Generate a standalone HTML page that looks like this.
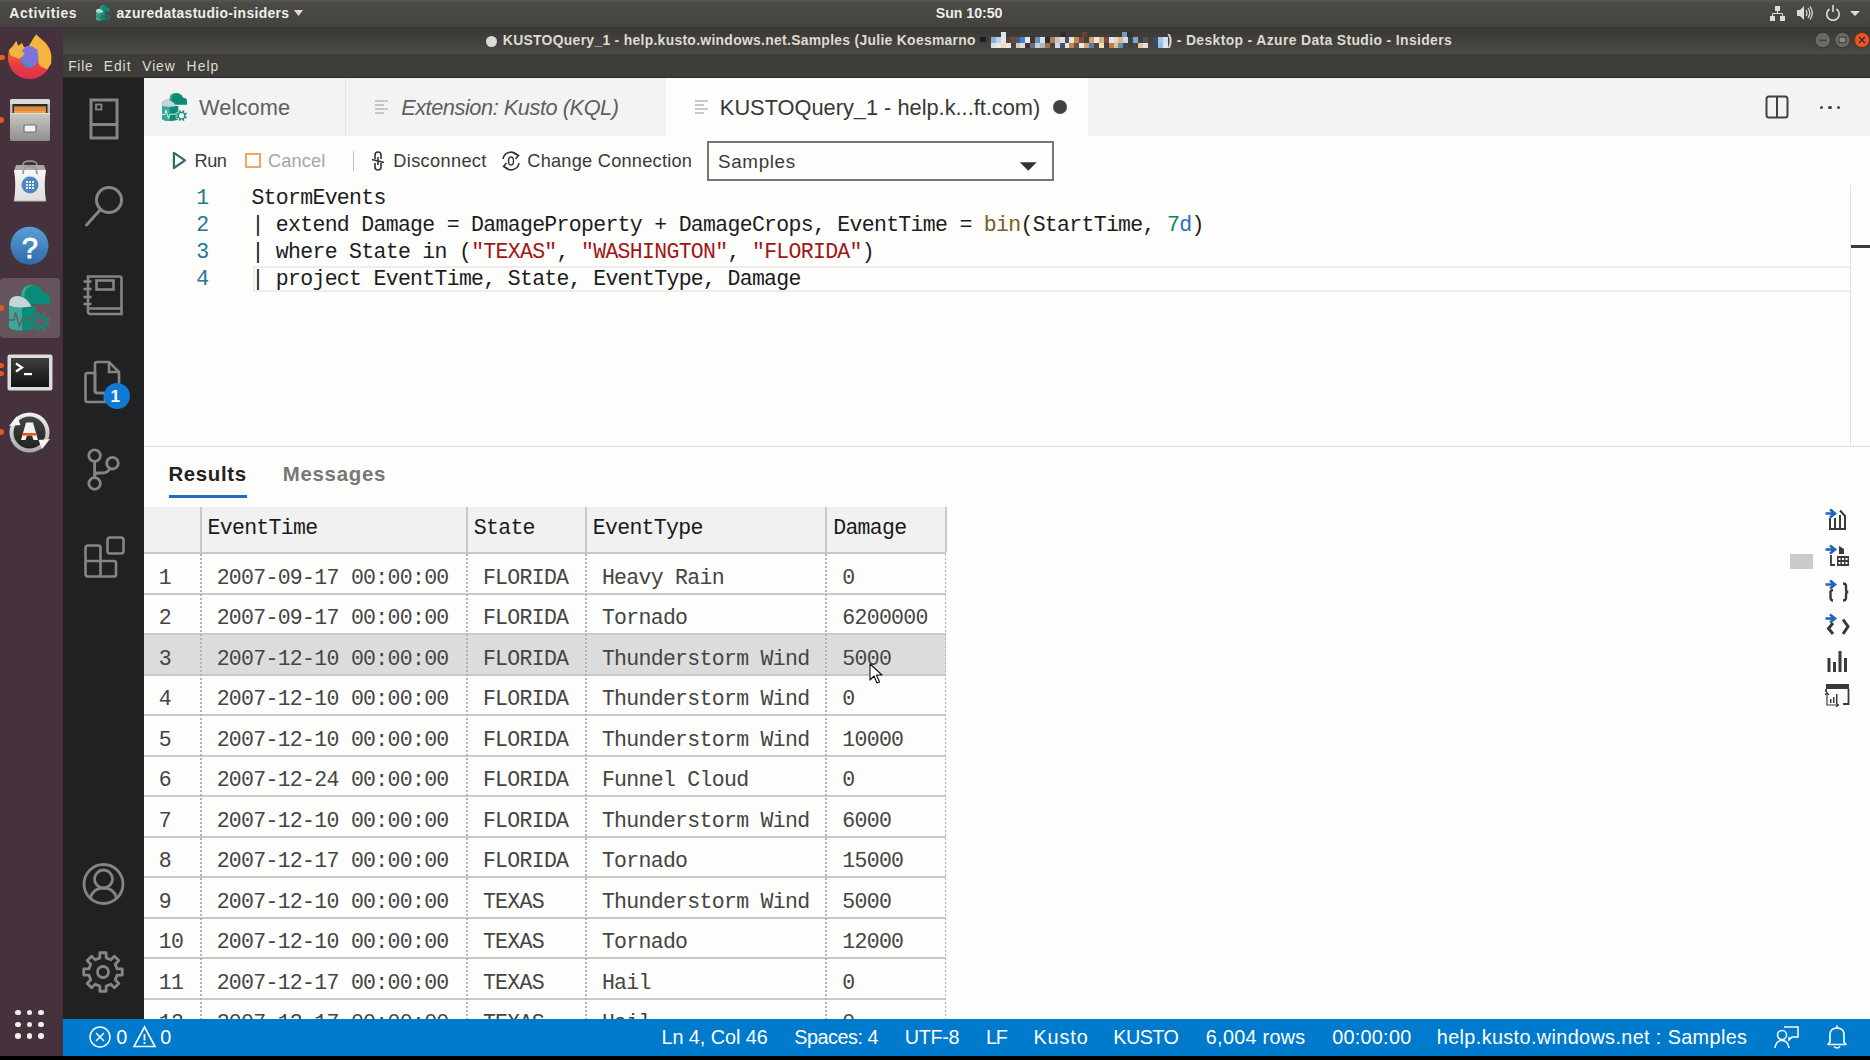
<!DOCTYPE html>
<html><head><meta charset="utf-8">
<style>
*{box-sizing:border-box;margin:0;padding:0}
html,body{width:1870px;height:1060px;overflow:hidden;background:#000;font-family:"Liberation Sans",sans-serif}
.t{position:absolute;white-space:pre;line-height:1}
.r{position:absolute;display:block}
.m{font-family:"Liberation Mono",monospace;letter-spacing:-0.695px}
</style></head><body>

<div class="r" style="left:0px;top:0px;width:1870px;height:27px;background:linear-gradient(#575651 0px,#4b4a45 3px,#44433f 26px);"></div>
<div class="t" style="left:9.32px;top:7.49px;font-size:13.9px;color:#eeeeec;letter-spacing:0.613px;font-weight:700;">Activities</div>
<svg class="r" style="left:96px;top:5px" width="14" height="15.5" viewBox="9 11 41 45.5"><path d="M21.5 30 V21 Q21.5 11 32 11 Q40 11 43.5 18.5 Q50 18.5 50 24.5 V30.2 Z" fill="#0c8b79"/>
<path d="M21.5 30 V21 Q21.5 11 32 11 Q33 11 34 11.3 Q24.5 13 24.5 21 V30 Z" fill="#3aa898"/>
<path d="M9 30 Q9 22 19 22 Q27 22 31 32 L35.6 32 V52 Q35.6 56.5 22 56.5 Q9 56.5 9 52z" fill="#0c8b79"/>
<path d="M9 30 Q9 22 19 22 Q22 22 22 30 V56.5 Q9 56.5 9 52z" fill="#3aa898"/>
<path d="M9 31 Q9 22 18 22 Q27 23 31.5 32.5 L22 33.5 Q12 33.5 9 31z" fill="#c6d6dc"/>
<path d="M8 46 H14 L15.5 38.5 L19.5 52 L22 45.5 H34" fill="none" stroke="#4a4945" stroke-width="1.4"/>
<polygon points="41.70,41.06 42.64,38.38 46.16,39.84 44.93,42.40 46.20,43.67 48.76,42.44 50.22,45.96 47.54,46.90 47.54,48.70 50.22,49.64 48.76,53.16 46.20,51.93 44.93,53.20 46.16,55.76 42.64,57.22 41.70,54.54 39.90,54.54 38.96,57.22 35.44,55.76 36.67,53.20 35.40,51.93 32.84,53.16 31.38,49.64 34.06,48.70 34.06,46.90 31.38,45.96 32.84,42.44 35.40,43.67 36.67,42.40 35.44,39.84 38.96,38.38 39.90,41.06" fill="#0c8b79" stroke="#4a4945" stroke-width="1"/>
<circle cx="40.8" cy="47.8" r="4.3" fill="#4a4945"/></svg>
<div class="t" style="left:116.52px;top:7.49px;font-size:13.9px;color:#eeeeec;letter-spacing:0.355px;font-weight:700;">azuredatastudio-insiders</div>
<svg class="r" style="left:294px;top:10px;" width="10" height="7" viewBox="0 0 10 7"><path d="M0 0 L9 0 L4.5 6z" fill="#dcdcd8"/></svg>
<div class="t" style="left:935.83px;top:6.38px;font-size:14.2px;color:#eeeeec;letter-spacing:-0.048px;font-weight:700;">Sun 10:50</div>
<svg class="r" style="left:1769px;top:5px;" width="17" height="17" viewBox="0 0 17 17"><rect x="6" y="1" width="5" height="5" fill="#dcdcdc"/><rect x="1" y="11" width="5" height="5" fill="#dcdcdc"/><rect x="11" y="11" width="5" height="5" fill="#dcdcdc"/><path d="M8.5 6 V8.5 M3.5 11 V8.5 H13.5 V11" stroke="#dcdcdc" stroke-width="1" fill="none"/></svg>
<svg class="r" style="left:1796px;top:5px;" width="17" height="16" viewBox="0 0 17 16"><path d="M1 5 H4 L8 1 V15 L4 11 H1z" fill="#dcdcdc"/><path d="M10 5 Q12 8 10 11 M12 3 Q15.5 8 12 13 M14 1.5 Q18.5 8 14 14.5" stroke="#dcdcdc" stroke-width="1.3" fill="none"/></svg>
<svg class="r" style="left:1825px;top:4px;" width="16" height="17" viewBox="0 0 16 17"><path d="M4.5 5 A6.2 6.2 0 1 0 11.5 5" stroke="#dcdcdc" stroke-width="1.6" fill="none"/><path d="M8 1 V8" stroke="#dcdcdc" stroke-width="1.6"/></svg>
<svg class="r" style="left:1850px;top:11px;" width="11" height="6" viewBox="0 0 11 6"><path d="M0 0 H10 L5 5z" fill="#dcdcdc"/></svg>
<div class="r" style="left:0px;top:27px;width:63px;height:1029px;background:#46323c;"></div>
<svg class="r" style="left:0px;top:26px;" width="62" height="64" viewBox="0 0 62 64"><defs><linearGradient id="ffg" x1="0" y1="0" x2="0" y2="1"><stop offset="0" stop-color="#f39a30"/><stop offset="0.45" stop-color="#ee5a2c"/><stop offset="0.7" stop-color="#e73a46"/><stop offset="1" stop-color="#e22f4b"/></linearGradient></defs>
<circle cx="29.6" cy="31.4" r="21.7" fill="url(#ffg)"/>
<path d="M0 1.2 L36.2 1.2 L36.2 8.2 L29 20 L24 21.5 L22 16.9 L18.1 19.9 L16.3 15 L13 20 L9 24 L0 26z" fill="#46323c"/>
<path d="M9 24 L13 20 L16.3 15 L18.1 19.9 L22 16.9 L24 21.5 L29 20 L33 13 L36.2 8.2 L41 13 L45.9 18.1 L49.5 23 L51.3 29 L51.2 37.4 L47 43.5 L40 40 L38.6 37.4 L38 28 L33 22 L25 24 L20 33 L14 31 L10 29z" fill="#f3b53e"/>
<ellipse cx="29.5" cy="30.9" rx="9" ry="10.9" fill="#7b74da"/>
<path d="M20.6 33 Q22 40 29 41.8 Q33 41.8 35 40 Q27 40 24 35z" fill="#3a8fd0"/>
<path d="M34 22 Q37 23 38.5 25 Q36 25.5 34.5 24.5z" fill="#7b74da"/>
<path d="M13.5 27 L21 25 L25 27 L22 31 L16 31z" fill="#f3b53e"/></svg>
<div class="r" style="left:0px;top:55px;width:4.5px;height:5px;background:#ee5a24;border-radius:0 3px 3px 0"></div>
<svg class="r" style="left:9px;top:98px;" width="42" height="44" viewBox="0 0 42 44"><defs><linearGradient id="fg1" x1="0" y1="0" x2="0" y2="1"><stop offset="0" stop-color="#c9c9c7"/><stop offset="1" stop-color="#8e8e8c"/></linearGradient></defs>
<rect x="1" y="1" width="40" height="42" rx="2.5" fill="url(#fg1)"/>
<rect x="1" y="1" width="40" height="5" rx="2" fill="#dadad8"/>
<rect x="3.5" y="6" width="35" height="9" fill="#2b2b29"/>
<rect x="5" y="8.5" width="32" height="6.5" fill="#f0a048"/>
<path d="M5 10 H37 M5 12 H37" stroke="#d8602a" stroke-width="0.8"/>
<rect x="1" y="15" width="40" height="28" rx="2" fill="url(#fg1)"/>
<path d="M1 15.5 H41" stroke="#e2e2e0" stroke-width="1"/>
<rect x="15" y="27" width="12" height="7" rx="1" fill="#f2f2f0" stroke="#6e6e6c" stroke-width="1.2"/></svg>
<div class="r" style="left:0px;top:117px;width:4px;height:6px;background:#e95420;border-radius:0 3px 3px 0"></div>
<svg class="r" style="left:11px;top:160px;" width="38" height="43" viewBox="0 0 38 43"><defs><linearGradient id="bg1" x1="0" y1="0" x2="0" y2="1"><stop offset="0" stop-color="#f6f6f4"/><stop offset="1" stop-color="#dededc"/></linearGradient></defs>
<path d="M5 5 H33 L35 11 H3z" fill="#a8a8a6"/>
<path d="M3 10 H35 Q32.5 25 35 41 H3 Q5.5 25 3 10z" fill="url(#bg1)"/>
<path d="M3 41 H35" stroke="#b8b8b6" stroke-width="1"/>
<path d="M12 14 Q12 6 19 6 Q26 6 26 14" stroke="#9a9a98" stroke-width="1.8" fill="none"/>
<path d="M12 5 Q12 1 19 1 Q26 1 26 5" stroke="#9a9a98" stroke-width="1.6" fill="none"/>
<circle cx="19" cy="25" r="8.5" fill="#4f86c6"/>
<g fill="#e8eef8"><rect x="15" y="21" width="2" height="2"/><rect x="18" y="21" width="2" height="2"/><rect x="21" y="21" width="2" height="2"/><rect x="15" y="24" width="2" height="2"/><rect x="18" y="24" width="2" height="2"/><rect x="21" y="24" width="2" height="2"/><rect x="15" y="27" width="2" height="2"/><rect x="18" y="27" width="2" height="2"/><rect x="21" y="27" width="2" height="2"/></g></svg>
<svg class="r" style="left:10px;top:226px;" width="40" height="40" viewBox="0 0 40 40"><defs><linearGradient id="hg" x1="0" y1="0" x2="0" y2="1"><stop offset="0" stop-color="#5b9fd8"/><stop offset="1" stop-color="#2f6aa8"/></linearGradient></defs>
<circle cx="19.5" cy="19.7" r="19" fill="url(#hg)"/>
<text x="19.8" y="31.5" text-anchor="middle" font-family="Liberation Sans" font-weight="400" font-size="29" fill="#fff" stroke="#fff" stroke-width="0.9">?</text></svg>
<div class="r" style="left:0px;top:278px;width:60px;height:60px;background:rgba(255,255,255,0.17);border-radius:4px"></div>
<svg class="r" style="left:0px;top:274px;" width="62" height="68" viewBox="0 0 62 68"><path d="M21.5 30 V21 Q21.5 11 32 11 Q40 11 43.5 18.5 Q50 18.5 50 24.5 V30.2 Z" fill="#0c8b79"/>
<path d="M21.5 30 V21 Q21.5 11 32 11 Q33 11 34 11.3 Q24.5 13 24.5 21 V30 Z" fill="#3aa898"/>
<path d="M9 30 Q9 22 19 22 Q27 22 31 32 L35.6 32 V52 Q35.6 56.5 22 56.5 Q9 56.5 9 52z" fill="#0c8b79"/>
<path d="M9 30 Q9 22 19 22 Q22 22 22 30 V56.5 Q9 56.5 9 52z" fill="#3aa898"/>
<path d="M9 31 Q9 22 18 22 Q27 23 31.5 32.5 L22 33.5 Q12 33.5 9 31z" fill="#c6d6dc"/>
<path d="M8 46 H14 L15.5 38.5 L19.5 52 L22 45.5 H34" fill="none" stroke="#6a5a5f" stroke-width="1.4"/>
<polygon points="41.70,41.06 42.64,38.38 46.16,39.84 44.93,42.40 46.20,43.67 48.76,42.44 50.22,45.96 47.54,46.90 47.54,48.70 50.22,49.64 48.76,53.16 46.20,51.93 44.93,53.20 46.16,55.76 42.64,57.22 41.70,54.54 39.90,54.54 38.96,57.22 35.44,55.76 36.67,53.20 35.40,51.93 32.84,53.16 31.38,49.64 34.06,48.70 34.06,46.90 31.38,45.96 32.84,42.44 35.40,43.67 36.67,42.40 35.44,39.84 38.96,38.38 39.90,41.06" fill="#0c8b79" stroke="#6a5a5f" stroke-width="1"/>
<circle cx="40.8" cy="47.8" r="4.3" fill="#6a5a5f"/></svg>
<div class="r" style="left:0px;top:305px;width:4px;height:6px;background:#e95420;border-radius:0 3px 3px 0"></div>
<svg class="r" style="left:7px;top:354px;" width="46" height="37" viewBox="0 0 46 37"><defs><linearGradient id="tmg" x1="0" y1="0" x2="0" y2="1"><stop offset="0" stop-color="#3e3e3c"/><stop offset="1" stop-color="#121212"/></linearGradient></defs>
<rect x="0.5" y="0.5" width="45" height="36" rx="2" fill="#dcdcda"/>
<rect x="4" y="4" width="38" height="29" fill="url(#tmg)"/>
<path d="M9 9.5 L15 13.5 L9 17.5" stroke="#fff" stroke-width="2.2" fill="none"/>
<rect x="17" y="19" width="8" height="2.2" fill="#fff"/></svg>
<div class="r" style="left:0px;top:363px;width:4px;height:5px;background:#e95420;border-radius:0 3px 3px 0"></div>
<div class="r" style="left:0px;top:371px;width:4px;height:5px;background:#e95420;border-radius:0 3px 3px 0"></div>
<svg class="r" style="left:8px;top:411px;" width="43" height="43" viewBox="0 0 43 43"><defs><linearGradient id="ug" x1="0" y1="0" x2="0" y2="1"><stop offset="0" stop-color="#f4f4f2"/><stop offset="1" stop-color="#a8a8a6"/></linearGradient><linearGradient id="tg" x1="0" y1="0" x2="0" y2="1"><stop offset="0" stop-color="#444442"/><stop offset="1" stop-color="#222220"/></linearGradient></defs>
<circle cx="21.5" cy="21.5" r="20" fill="url(#ug)"/>
<circle cx="21.5" cy="21.5" r="16" fill="url(#tg)"/>
<path d="M13 29 L18 11.5 H25 L30 29 H25.5 L24 24.5 H19 L17.5 29z" fill="#f2f2f0"/>
<rect x="14" y="22" width="14" height="2.6" fill="#e95420"/>
<path d="M1 15 L9 5 L12.5 14z" fill="#f4f4f2"/><path d="M42 28 L34 38 L30.5 29z" fill="#f4f4f2"/></svg>
<div class="r" style="left:0px;top:429px;width:4px;height:6px;background:#e95420;border-radius:0 3px 3px 0"></div>
<div class="r" style="left:15.0px;top:1009.9px;width:5.6px;height:5.6px;border-radius:50%;background:#eeeeec"></div>
<div class="r" style="left:15.0px;top:1021.5px;width:5.6px;height:5.6px;border-radius:50%;background:#eeeeec"></div>
<div class="r" style="left:15.0px;top:1033.1px;width:5.6px;height:5.6px;border-radius:50%;background:#eeeeec"></div>
<div class="r" style="left:26.7px;top:1009.9px;width:5.6px;height:5.6px;border-radius:50%;background:#eeeeec"></div>
<div class="r" style="left:26.7px;top:1021.5px;width:5.6px;height:5.6px;border-radius:50%;background:#eeeeec"></div>
<div class="r" style="left:26.7px;top:1033.1px;width:5.6px;height:5.6px;border-radius:50%;background:#eeeeec"></div>
<div class="r" style="left:38.4px;top:1009.9px;width:5.6px;height:5.6px;border-radius:50%;background:#eeeeec"></div>
<div class="r" style="left:38.4px;top:1021.5px;width:5.6px;height:5.6px;border-radius:50%;background:#eeeeec"></div>
<div class="r" style="left:38.4px;top:1033.1px;width:5.6px;height:5.6px;border-radius:50%;background:#eeeeec"></div>
<div class="r" style="left:63px;top:27px;width:1807px;height:27px;background:linear-gradient(#393834 0px,#3c3b37 6px,#4b4a45 27px);"></div>
<div class="r" style="left:486px;top:35.6px;width:11.4px;height:11.4px;border-radius:50%;background:#dcdad5"></div>
<div class="t" style="left:502.87px;top:33.59px;font-size:13.9px;color:#dfdbd2;letter-spacing:0.301px;font-weight:700;">KUSTOQuery_1 - help.kusto.windows.net.Samples (Julie Koesmarno</div>
<div class="r" style="left:991.0px;top:37px;width:5px;height:5.5px;background:#8ab0d0;"></div>
<div class="r" style="left:995.9px;top:37px;width:5px;height:5.5px;background:#b8d4e8;"></div>
<div class="r" style="left:1000.8px;top:37px;width:5px;height:5.5px;background:#e0e8ee;"></div>
<div class="r" style="left:1005.7px;top:37px;width:5px;height:5.5px;background:#5a4035;"></div>
<div class="r" style="left:1010.6px;top:37px;width:5px;height:5.5px;background:#6a4a40;"></div>
<div class="r" style="left:1015.5px;top:37px;width:5px;height:5.5px;background:#3a5a90;"></div>
<div class="r" style="left:1020.4px;top:37px;width:5px;height:5.5px;background:#4a80c0;"></div>
<div class="r" style="left:1025.3px;top:37px;width:5px;height:5.5px;background:#e0e8f0;"></div>
<div class="r" style="left:1030.2px;top:37px;width:5px;height:5.5px;background:#4a3030;"></div>
<div class="r" style="left:1035.1px;top:37px;width:5px;height:5.5px;background:#6a90b8;"></div>
<div class="r" style="left:1040.0px;top:37px;width:5px;height:5.5px;background:#d0e0f0;"></div>
<div class="r" style="left:1044.9px;top:37px;width:5px;height:5.5px;background:#302838;"></div>
<div class="r" style="left:1049.8px;top:37px;width:5px;height:5.5px;background:#b08050;"></div>
<div class="r" style="left:1054.7px;top:37px;width:5px;height:5.5px;background:#c0c8d0;"></div>
<div class="r" style="left:1059.6px;top:37px;width:5px;height:5.5px;background:#f0e0c0;"></div>
<div class="r" style="left:1064.5px;top:37px;width:5px;height:5.5px;background:#3a5080;"></div>
<div class="r" style="left:1069.4px;top:37px;width:5px;height:5.5px;background:#f0e0d0;"></div>
<div class="r" style="left:1074.3px;top:37px;width:5px;height:5.5px;background:#c08850;"></div>
<div class="r" style="left:1079.2px;top:37px;width:5px;height:5.5px;background:#705040;"></div>
<div class="r" style="left:1089.0px;top:37px;width:5px;height:5.5px;background:#d0a070;"></div>
<div class="r" style="left:1093.9px;top:37px;width:5px;height:5.5px;background:#e8e8e8;"></div>
<div class="r" style="left:1098.8px;top:37px;width:5px;height:5.5px;background:#d8b080;"></div>
<div class="r" style="left:1103.7px;top:37px;width:5px;height:5.5px;background:#804830;"></div>
<div class="r" style="left:1108.6px;top:37px;width:5px;height:5.5px;background:#d8e8f8;"></div>
<div class="r" style="left:1113.5px;top:37px;width:5px;height:5.5px;background:#e8d8b0;"></div>
<div class="r" style="left:1118.4px;top:37px;width:5px;height:5.5px;background:#d8b888;"></div>
<div class="r" style="left:1123.3px;top:37px;width:5px;height:5.5px;background:#c8e0f0;"></div>
<div class="r" style="left:1133.1px;top:37px;width:5px;height:5.5px;background:#80a8c8;"></div>
<div class="r" style="left:1142.9px;top:37px;width:5px;height:5.5px;background:#505050;"></div>
<div class="r" style="left:1152.7px;top:37px;width:5px;height:5.5px;background:#404860;"></div>
<div class="r" style="left:1157.6px;top:37px;width:5px;height:5.5px;background:#a0c8e8;"></div>
<div class="r" style="left:1162.5px;top:37px;width:5px;height:5.5px;background:#d8e0e8;"></div>
<div class="r" style="left:991.0px;top:42.5px;width:5px;height:5px;background:#e0e0e0;"></div>
<div class="r" style="left:995.9px;top:42.5px;width:5px;height:5px;background:#e8e8e8;"></div>
<div class="r" style="left:1000.8px;top:42.5px;width:5px;height:5px;background:#f0d8b8;"></div>
<div class="r" style="left:1005.7px;top:42.5px;width:5px;height:5px;background:#e8e8e8;"></div>
<div class="r" style="left:1015.5px;top:42.5px;width:5px;height:5px;background:#e0c8a8;"></div>
<div class="r" style="left:1020.4px;top:42.5px;width:5px;height:5px;background:#d8dde0;"></div>
<div class="r" style="left:1025.3px;top:42.5px;width:5px;height:5px;background:#4a3030;"></div>
<div class="r" style="left:1030.2px;top:42.5px;width:5px;height:5px;background:#607080;"></div>
<div class="r" style="left:1035.1px;top:42.5px;width:5px;height:5px;background:#c8d0d0;"></div>
<div class="r" style="left:1040.0px;top:42.5px;width:5px;height:5px;background:#a8b8c8;"></div>
<div class="r" style="left:1044.9px;top:42.5px;width:5px;height:5px;background:#a07040;"></div>
<div class="r" style="left:1054.7px;top:42.5px;width:5px;height:5px;background:#d8d8d8;"></div>
<div class="r" style="left:1059.6px;top:42.5px;width:5px;height:5px;background:#3a5080;"></div>
<div class="r" style="left:1064.5px;top:42.5px;width:5px;height:5px;background:#f0e0d0;"></div>
<div class="r" style="left:1069.4px;top:42.5px;width:5px;height:5px;background:#c08850;"></div>
<div class="r" style="left:1074.3px;top:42.5px;width:5px;height:5px;background:#705040;"></div>
<div class="r" style="left:1079.2px;top:42.5px;width:5px;height:5px;background:#e8e8e8;"></div>
<div class="r" style="left:1084.1px;top:42.5px;width:5px;height:5px;background:#d8a070;"></div>
<div class="r" style="left:1089.0px;top:42.5px;width:5px;height:5px;background:#5080b0;"></div>
<div class="r" style="left:1093.9px;top:42.5px;width:5px;height:5px;background:#604030;"></div>
<div class="r" style="left:1098.8px;top:42.5px;width:5px;height:5px;background:#f0e0c0;"></div>
<div class="r" style="left:1103.7px;top:42.5px;width:5px;height:5px;background:#404050;"></div>
<div class="r" style="left:1108.6px;top:42.5px;width:5px;height:5px;background:#c08040;"></div>
<div class="r" style="left:1113.5px;top:42.5px;width:5px;height:5px;background:#e0c090;"></div>
<div class="r" style="left:1118.4px;top:42.5px;width:5px;height:5px;background:#6090b0;"></div>
<div class="r" style="left:1128.2px;top:42.5px;width:5px;height:5px;background:#404040;"></div>
<div class="r" style="left:1138.0px;top:42.5px;width:5px;height:5px;background:#e0c8a0;"></div>
<div class="r" style="left:1142.9px;top:42.5px;width:5px;height:5px;background:#e0e0e0;"></div>
<div class="r" style="left:1152.7px;top:42.5px;width:5px;height:5px;background:#404860;"></div>
<div class="r" style="left:1157.6px;top:42.5px;width:5px;height:5px;background:#90c0e8;"></div>
<div class="r" style="left:1162.5px;top:42.5px;width:5px;height:5px;background:#e0e8f0;"></div>
<div class="r" style="left:980px;top:37px;width:6px;height:5px;background:#1e1e22;"></div>
<div class="r" style="left:1001px;top:32px;width:5px;height:5px;background:#dde4ea;"></div>
<div class="r" style="left:1061px;top:32px;width:5px;height:5px;background:#2b2b30;"></div>
<div class="r" style="left:1082px;top:32px;width:5px;height:5px;background:#6a4030;"></div>
<div class="r" style="left:1122px;top:32px;width:5px;height:5px;background:#7a9ab8;"></div>
<div class="r" style="left:1127px;top:32px;width:5px;height:5px;background:#303035;"></div>
<div class="t" style="left:1167.50px;top:33.59px;font-size:13.9px;color:#dfdbd2;letter-spacing:0.374px;font-weight:700;">) - Desktop - Azure Data Studio - Insiders</div>
<svg class="r" style="left:1814px;top:32px;" width="56" height="17" viewBox="0 0 56 17"><circle cx="8.8" cy="8.1" r="7.7" fill="#6a6964" stroke="#2f2e2b" stroke-width="0.8"/>
<rect x="5.5" y="7.6" width="6.6" height="1.2" fill="#3a3936"/>
<circle cx="28.4" cy="8.1" r="7.7" fill="#6a6964" stroke="#2f2e2b" stroke-width="0.8"/>
<rect x="25" y="5.2" width="6.8" height="5.4" fill="#8a8984" stroke="#3a3936" stroke-width="1"/>
<circle cx="48" cy="8.1" r="7.7" fill="#e95420" stroke="#2f2e2b" stroke-width="0.8"/>
<path d="M45 5 L51 11 M51 5 L45 11" stroke="#2a2a2a" stroke-width="1.2"/></svg>
<div class="r" style="left:63px;top:54px;width:1807px;height:24px;background:#3e3d39;"></div>
<div class="r" style="left:63px;top:77px;width:1807px;height:1px;background:#2a2a28;"></div>
<div class="t" style="left:68.20px;top:59.87px;font-size:13.8px;color:#dfdbd2;letter-spacing:0.759px;">File</div>
<div class="t" style="left:103.70px;top:59.87px;font-size:13.8px;color:#dfdbd2;letter-spacing:1.023px;">Edit</div>
<div class="t" style="left:142.30px;top:59.87px;font-size:13.8px;color:#dfdbd2;letter-spacing:0.889px;">View</div>
<div class="t" style="left:186.60px;top:59.87px;font-size:13.8px;color:#dfdbd2;letter-spacing:1.076px;">Help</div>
<div class="r" style="left:63px;top:78px;width:81px;height:941px;background:#212124;"></div>
<svg class="r" style="left:88px;top:97px;" width="32" height="44" viewBox="0 0 32 44"><rect x="3" y="3" width="26" height="38" fill="none" stroke="#858585" stroke-width="3"/>
<path d="M3 27.5 H29" stroke="#858585" stroke-width="3"/>
<rect x="8" y="7.5" width="5.5" height="5" fill="none" stroke="#858585" stroke-width="1.8"/></svg>
<svg class="r" style="left:82px;top:182px;" width="44" height="48" viewBox="0 0 44 48"><circle cx="27" cy="18" r="12.5" fill="none" stroke="#858585" stroke-width="3"/>
<path d="M18.5 27.5 L4.5 43" stroke="#858585" stroke-width="3" stroke-linecap="round"/></svg>
<svg class="r" style="left:82px;top:273px;" width="42" height="44" viewBox="0 0 42 44"><path d="M6 3.5 H37.5 Q39.5 3.5 39.5 5.5 V41 H8.5 Q6 41 6 38.5z" fill="none" stroke="#858585" stroke-width="2.6"/>
<path d="M6 35.5 H39.5" stroke="#858585" stroke-width="2.6"/>
<rect x="14.5" y="7.5" width="17" height="9" fill="none" stroke="#858585" stroke-width="2.6"/>
<path d="M1.5 8.5 H9.5 M1.5 16 H9.5 M1.5 24 H9.5 M1.5 31 H9.5" stroke="#858585" stroke-width="2.6"/></svg>
<svg class="r" style="left:82px;top:360px;" width="42" height="46" viewBox="0 0 42 46"><path d="M3.5 15 Q3.5 13 5.5 13 H13 V31 Q13 33 15 33 H23 V42 H5.5 Q3.5 42 3.5 40z" fill="none" stroke="#858585" stroke-width="2.6"/>
<path d="M13 4 Q13 2 15 2 H27 L37 12 V31 Q37 33 35 33 H15 Q13 33 13 31z" fill="none" stroke="#858585" stroke-width="2.6"/>
<path d="M27 2 V12 H37" fill="none" stroke="#858585" stroke-width="2.6"/></svg>
<div class="r" style="left:104px;top:382.7px;width:26px;height:26px;border-radius:50%;background:#0e7ad4"></div>
<div class="t" style="left:110.50px;top:387.75px;font-size:17px;color:#ffffff;font-weight:700;">1</div>
<svg class="r" style="left:84px;top:444px;" width="42" height="48" viewBox="0 0 42 48"><circle cx="10.6" cy="11.6" r="5.8" fill="none" stroke="#858585" stroke-width="2.8"/>
<circle cx="28.5" cy="19.2" r="5.8" fill="none" stroke="#858585" stroke-width="2.8"/>
<circle cx="10.6" cy="39.5" r="5.8" fill="none" stroke="#858585" stroke-width="2.8"/>
<path d="M10.6 17.4 V33.7" stroke="#858585" stroke-width="2.8"/>
<path d="M26 24.5 Q24 29 18 29 H14 Q11 29 10.6 32" fill="none" stroke="#858585" stroke-width="2.8"/></svg>
<svg class="r" style="left:82px;top:536px;" width="44" height="44" viewBox="0 0 44 44"><path d="M3.5 35 V33 M3.5 38 Q3.5 40.5 6 40.5 H32 Q34 40.5 34 38.5 V27 Q34 25 32 25 H18.5 V11.5 Q18.5 9.5 16.5 9.5 H6 Q3.5 9.5 3.5 12z" fill="none" stroke="#858585" stroke-width="2.6"/>
<path d="M3.5 25 H18.5 V40.5" fill="none" stroke="#858585" stroke-width="2.6"/>
<rect x="25.5" y="1.5" width="16" height="16" rx="2.5" fill="none" stroke="#858585" stroke-width="2.6"/></svg>
<svg class="r" style="left:81px;top:861px;" width="46" height="46" viewBox="0 0 46 46"><circle cx="22.5" cy="23" r="19.5" fill="none" stroke="#858585" stroke-width="2.8"/>
<circle cx="22.5" cy="18" r="9" fill="none" stroke="#858585" stroke-width="2.8"/>
<path d="M9.5 37 Q12 27 22.5 27 Q33 27 35.5 37" fill="none" stroke="#858585" stroke-width="2.8"/></svg>
<svg class="r" style="left:80px;top:949px;" width="46" height="46" viewBox="0 0 46 46"><polygon points="19.84,8.85 19.89,3.75 26.11,3.75 26.16,8.85 30.77,10.76 34.42,7.19 38.81,11.58 35.24,15.23 37.15,19.84 42.25,19.89 42.25,26.11 37.15,26.16 35.24,30.77 38.81,34.42 34.42,38.81 30.77,35.24 26.16,37.15 26.11,42.25 19.89,42.25 19.84,37.15 15.23,35.24 11.58,38.81 7.19,34.42 10.76,30.77 8.85,26.16 3.75,26.11 3.75,19.89 8.85,19.84 10.76,15.23 7.19,11.58 11.58,7.19 15.23,10.76" fill="none" stroke="#858585" stroke-width="2.8" stroke-linejoin="round"/>
<circle cx="23" cy="23" r="5.5" fill="none" stroke="#858585" stroke-width="2.8"/></svg>
<div class="r" style="left:144px;top:78px;width:1726px;height:58px;background:#f3f3f3;"></div>
<div class="r" style="left:345px;top:78px;width:1px;height:58px;background:#e4e4e4;"></div>
<div class="r" style="left:666px;top:78px;width:422px;height:58px;background:#fdfdfc;"></div>
<svg class="r" style="left:161.5px;top:92.5px" width="25.2" height="28" viewBox="9 11 41 45.5"><path d="M21.5 30 V21 Q21.5 11 32 11 Q40 11 43.5 18.5 Q50 18.5 50 24.5 V30.2 Z" fill="#0c8b79"/>
<path d="M21.5 30 V21 Q21.5 11 32 11 Q33 11 34 11.3 Q24.5 13 24.5 21 V30 Z" fill="#3aa898"/>
<path d="M9 30 Q9 22 19 22 Q27 22 31 32 L35.6 32 V52 Q35.6 56.5 22 56.5 Q9 56.5 9 52z" fill="#0c8b79"/>
<path d="M9 30 Q9 22 19 22 Q22 22 22 30 V56.5 Q9 56.5 9 52z" fill="#3aa898"/>
<path d="M9 31 Q9 22 18 22 Q27 23 31.5 32.5 L22 33.5 Q12 33.5 9 31z" fill="#c6d6dc"/>
<path d="M8 46 H14 L15.5 38.5 L19.5 52 L22 45.5 H34" fill="none" stroke="#f3f3f3" stroke-width="1.4"/>
<polygon points="41.70,41.06 42.64,38.38 46.16,39.84 44.93,42.40 46.20,43.67 48.76,42.44 50.22,45.96 47.54,46.90 47.54,48.70 50.22,49.64 48.76,53.16 46.20,51.93 44.93,53.20 46.16,55.76 42.64,57.22 41.70,54.54 39.90,54.54 38.96,57.22 35.44,55.76 36.67,53.20 35.40,51.93 32.84,53.16 31.38,49.64 34.06,48.70 34.06,46.90 31.38,45.96 32.84,42.44 35.40,43.67 36.67,42.40 35.44,39.84 38.96,38.38 39.90,41.06" fill="#0c8b79" stroke="#f3f3f3" stroke-width="1"/>
<circle cx="40.8" cy="47.8" r="4.3" fill="#f3f3f3"/></svg>
<div class="t" style="left:199.00px;top:97.07px;font-size:21.8px;color:#5f5f5f;letter-spacing:0.103px;">Welcome</div>
<svg class="r" style="left:375px;top:100px;" width="14" height="15" viewBox="0 0 14 15"><path d="M0 1 H13 M0 5 H9 M0 9 H13 M0 13 H9" stroke="#b8b8b8" stroke-width="1.6"/></svg>
<div class="t" style="left:401.13px;top:97.07px;font-size:21.8px;color:#5f5f5f;letter-spacing:-0.469px;font-style:italic;">Extension: Kusto (KQL)</div>
<svg class="r" style="left:695px;top:99.5px;" width="14" height="15" viewBox="0 0 14 15"><path d="M0 1 H13 M0 5 H9 M0 9 H13 M0 13 H9" stroke="#b8b8b8" stroke-width="1.6"/></svg>
<div class="t" style="left:719.86px;top:97.07px;font-size:21.8px;color:#383838;letter-spacing:-0.007px;">KUSTOQuery_1 - help.k...ft.com)</div>
<div class="r" style="left:1053px;top:99.6px;width:14px;height:14px;border-radius:50%;background:#424242"></div>
<svg class="r" style="left:1765px;top:95px;" width="24" height="24" viewBox="0 0 24 24"><rect x="1.5" y="1.5" width="21" height="21" rx="2.5" fill="none" stroke="#424242" stroke-width="2"/><path d="M12 1.5 V22.5" stroke="#424242" stroke-width="2"/></svg>
<div class="r" style="left:1819.8px;top:105.8px;width:3.6px;height:3.6px;border-radius:50%;background:#424242"></div>
<div class="r" style="left:1828.2px;top:105.8px;width:3.6px;height:3.6px;border-radius:50%;background:#424242"></div>
<div class="r" style="left:1836.8px;top:105.8px;width:3.6px;height:3.6px;border-radius:50%;background:#424242"></div>
<div class="r" style="left:144px;top:136px;width:1726px;height:310px;background:#fdfdfc;"></div>
<svg class="r" style="left:171px;top:150px;" width="18" height="21" viewBox="0 0 18 21"><path d="M2.9 2.8 L14 10.4 L2.9 18z" fill="none" stroke="#2b6f6c" stroke-width="2.2" stroke-linejoin="round"/></svg>
<div class="t" style="left:194.44px;top:152.03px;font-size:18.2px;color:#3a3a3a;letter-spacing:-0.420px;">Run</div>
<div class="r" style="left:244.5px;top:152.5px;width:16px;height:15px;background:transparent;border:2px solid #eba763"></div>
<div class="t" style="left:267.97px;top:152.03px;font-size:18.2px;color:#a6a6a6;letter-spacing:0.140px;">Cancel</div>
<div class="r" style="left:353px;top:151px;width:1.2px;height:19.5px;background:#bdbdbd;"></div>
<svg class="r" style="left:369px;top:150px;" width="18" height="22" viewBox="0 0 18 22"><path d="M6 9 V5 Q6 2 9 2 Q12 2 12 5 V9 M6 13 V17 Q6 20 9 20 Q12 20 12 17 V13" fill="none" stroke="#333" stroke-width="1.6"/>
<path d="M9 7 V15 M3 9.5 L15 12.5" stroke="#333" stroke-width="1.6"/></svg>
<div class="t" style="left:393.34px;top:152.03px;font-size:18.2px;color:#3a3a3a;letter-spacing:0.339px;">Disconnect</div>
<svg class="r" style="left:500px;top:150px;" width="22" height="22" viewBox="0 0 22 22"><path d="M3 9 A8 8 0 0 1 17 5" fill="none" stroke="#333" stroke-width="1.6"/>
<path d="M19 13 A8 8 0 0 1 5 17" fill="none" stroke="#333" stroke-width="1.6"/>
<path d="M14 3 L18.5 5.5 L15.5 9" fill="none" stroke="#333" stroke-width="1.6"/>
<path d="M8 19 L3.5 16.5 L6.5 13" fill="none" stroke="#333" stroke-width="1.6"/>
<ellipse cx="11" cy="11" rx="2.5" ry="4" fill="none" stroke="#333" stroke-width="1.4"/></svg>
<div class="t" style="left:527.27px;top:152.03px;font-size:18.2px;color:#3a3a3a;letter-spacing:0.246px;">Change Connection</div>
<div class="r" style="left:706.6px;top:141.4px;width:347px;height:39.4px;background:#fdfdfc;border:2px solid #767676"></div>
<div class="t" style="left:718.05px;top:152.52px;font-size:18.8px;color:#3a3a3a;letter-spacing:0.664px;">Samples</div>
<svg class="r" style="left:1019px;top:162px;" width="19" height="10" viewBox="0 0 19 10"><path d="M0.8 0.3 H17.7 L9.25 8.8z" fill="#333"/></svg>
<div class="r" style="left:252.5px;top:266px;width:1598px;height:26px;background:transparent;border:2px solid #ededed;border-right:none"></div>
<div class="t m" style="left:196.20px;top:188.06px;font-size:21.5px;color:#237893;">1</div>
<div class="t m" style="left:196.20px;top:215.06px;font-size:21.5px;color:#237893;">2</div>
<div class="t m" style="left:196.20px;top:241.96px;font-size:21.5px;color:#237893;">3</div>
<div class="t m" style="left:196.20px;top:268.96px;font-size:21.5px;color:#237893;">4</div>
<div class="t m" style="left:251.4px;top:188.06px;font-size:21.5px"><span style="color:#1c1c1c">StormEvents</span></div>
<div class="t m" style="left:251.4px;top:215.06px;font-size:21.5px"><span style="color:#1c1c1c">| extend Damage = DamageProperty + DamageCrops, EventTime = </span><span style="color:#795e26">bin</span><span style="color:#1c1c1c">(StartTime, </span><span style="color:#09885a">7</span><span style="color:#1f6fc5">d</span><span style="color:#1c1c1c">)</span></div>
<div class="t m" style="left:251.4px;top:241.96px;font-size:21.5px"><span style="color:#1c1c1c">| where State in (</span><span style="color:#a31515">"TEXAS"</span><span style="color:#1c1c1c">, </span><span style="color:#a31515">"WASHINGTON"</span><span style="color:#1c1c1c">, </span><span style="color:#a31515">"FLORIDA"</span><span style="color:#1c1c1c">)</span></div>
<div class="t m" style="left:251.4px;top:268.96px;font-size:21.5px"><span style="color:#1c1c1c">| project EventTime, State, EventType, Damage</span></div>
<div class="r" style="left:1850.3px;top:185px;width:1px;height:261px;background:#e3e3e3;"></div>
<div class="r" style="left:1851px;top:245px;width:19px;height:3px;background:#3b3b3b;"></div>
<div class="r" style="left:144px;top:446px;width:1726px;height:573px;background:#fdfdfc;"></div>
<div class="r" style="left:144px;top:446px;width:1726px;height:1.3px;background:#dedede;"></div>
<div class="t" style="left:168.38px;top:464.06px;font-size:20.4px;color:#222222;letter-spacing:0.665px;font-weight:700;">Results</div>
<div class="r" style="left:168.5px;top:494.8px;width:78.5px;height:2.8px;background:#1f6fc0;"></div>
<div class="t" style="left:282.68px;top:464.26px;font-size:20.4px;color:#777777;letter-spacing:0.747px;font-weight:700;">Messages</div>
<div class="r" style="left:144px;top:507px;width:802px;height:45px;background:#f1f1f1;"></div>
<div class="r" style="left:144px;top:551.5px;width:802px;height:2.6px;background:#c6c6c6;"></div>
<div class="r" style="left:199.75px;top:507px;width:1.8px;height:45px;background:#c9c9c9;"></div>
<div class="r" style="left:466px;top:507px;width:1.8px;height:45px;background:#c9c9c9;"></div>
<div class="r" style="left:585px;top:507px;width:1.8px;height:45px;background:#c9c9c9;"></div>
<div class="r" style="left:825.4px;top:507px;width:1.8px;height:45px;background:#c9c9c9;"></div>
<div class="r" style="left:945px;top:507px;width:1.8px;height:45px;background:#c9c9c9;"></div>
<div class="t m" style="left:207.53px;top:517.86px;font-size:21.5px;color:#1a1a1a;">EventTime</div>
<div class="t m" style="left:473.78px;top:517.86px;font-size:21.5px;color:#1a1a1a;">State</div>
<div class="t m" style="left:592.78px;top:517.86px;font-size:21.5px;color:#1a1a1a;">EventType</div>
<div class="t m" style="left:833.18px;top:517.86px;font-size:21.5px;color:#1a1a1a;">Damage</div>
<div class="r" style="left:144px;top:554px;width:802px;height:465px;overflow:hidden">
<div class="r" style="left:0px;top:38.5px;width:802px;height:2px;background:#c9c9c9;"></div>
<div class="t m" style="left:14.80px;top:13.86px;font-size:21.5px;color:#444444;">1</div>
<div class="t m" style="left:72.63px;top:13.86px;font-size:21.5px;color:#444444;">2007-09-17 00:00:00</div>
<div class="t m" style="left:338.88px;top:13.86px;font-size:21.5px;color:#444444;">FLORIDA</div>
<div class="t m" style="left:457.88px;top:13.86px;font-size:21.5px;color:#444444;">Heavy Rain</div>
<div class="t m" style="left:698.28px;top:13.86px;font-size:21.5px;color:#444444;">0</div>
<div class="r" style="left:0px;top:79.0px;width:802px;height:2px;background:#c9c9c9;"></div>
<div class="t m" style="left:14.80px;top:54.36px;font-size:21.5px;color:#444444;">2</div>
<div class="t m" style="left:72.63px;top:54.36px;font-size:21.5px;color:#444444;">2007-09-17 00:00:00</div>
<div class="t m" style="left:338.88px;top:54.36px;font-size:21.5px;color:#444444;">FLORIDA</div>
<div class="t m" style="left:457.88px;top:54.36px;font-size:21.5px;color:#444444;">Tornado</div>
<div class="t m" style="left:698.28px;top:54.36px;font-size:21.5px;color:#444444;">6200000</div>
<div class="r" style="left:0px;top:81.0px;width:802px;height:40.5px;background:#dcdcdc;"></div>
<div class="r" style="left:0px;top:119.5px;width:802px;height:2px;background:#c9c9c9;"></div>
<div class="t m" style="left:14.80px;top:94.86px;font-size:21.5px;color:#444444;">3</div>
<div class="t m" style="left:72.63px;top:94.86px;font-size:21.5px;color:#444444;">2007-12-10 00:00:00</div>
<div class="t m" style="left:338.88px;top:94.86px;font-size:21.5px;color:#444444;">FLORIDA</div>
<div class="t m" style="left:457.88px;top:94.86px;font-size:21.5px;color:#444444;">Thunderstorm Wind</div>
<div class="t m" style="left:698.28px;top:94.86px;font-size:21.5px;color:#444444;">5000</div>
<div class="r" style="left:0px;top:160.0px;width:802px;height:2px;background:#c9c9c9;"></div>
<div class="t m" style="left:14.80px;top:135.36px;font-size:21.5px;color:#444444;">4</div>
<div class="t m" style="left:72.63px;top:135.36px;font-size:21.5px;color:#444444;">2007-12-10 00:00:00</div>
<div class="t m" style="left:338.88px;top:135.36px;font-size:21.5px;color:#444444;">FLORIDA</div>
<div class="t m" style="left:457.88px;top:135.36px;font-size:21.5px;color:#444444;">Thunderstorm Wind</div>
<div class="t m" style="left:698.28px;top:135.36px;font-size:21.5px;color:#444444;">0</div>
<div class="r" style="left:0px;top:200.5px;width:802px;height:2px;background:#c9c9c9;"></div>
<div class="t m" style="left:14.80px;top:175.86px;font-size:21.5px;color:#444444;">5</div>
<div class="t m" style="left:72.63px;top:175.86px;font-size:21.5px;color:#444444;">2007-12-10 00:00:00</div>
<div class="t m" style="left:338.88px;top:175.86px;font-size:21.5px;color:#444444;">FLORIDA</div>
<div class="t m" style="left:457.88px;top:175.86px;font-size:21.5px;color:#444444;">Thunderstorm Wind</div>
<div class="t m" style="left:698.28px;top:175.86px;font-size:21.5px;color:#444444;">10000</div>
<div class="r" style="left:0px;top:241.0px;width:802px;height:2px;background:#c9c9c9;"></div>
<div class="t m" style="left:14.80px;top:216.36px;font-size:21.5px;color:#444444;">6</div>
<div class="t m" style="left:72.63px;top:216.36px;font-size:21.5px;color:#444444;">2007-12-24 00:00:00</div>
<div class="t m" style="left:338.88px;top:216.36px;font-size:21.5px;color:#444444;">FLORIDA</div>
<div class="t m" style="left:457.88px;top:216.36px;font-size:21.5px;color:#444444;">Funnel Cloud</div>
<div class="t m" style="left:698.28px;top:216.36px;font-size:21.5px;color:#444444;">0</div>
<div class="r" style="left:0px;top:281.5px;width:802px;height:2px;background:#c9c9c9;"></div>
<div class="t m" style="left:14.80px;top:256.86px;font-size:21.5px;color:#444444;">7</div>
<div class="t m" style="left:72.63px;top:256.86px;font-size:21.5px;color:#444444;">2007-12-10 00:00:00</div>
<div class="t m" style="left:338.88px;top:256.86px;font-size:21.5px;color:#444444;">FLORIDA</div>
<div class="t m" style="left:457.88px;top:256.86px;font-size:21.5px;color:#444444;">Thunderstorm Wind</div>
<div class="t m" style="left:698.28px;top:256.86px;font-size:21.5px;color:#444444;">6000</div>
<div class="r" style="left:0px;top:322.0px;width:802px;height:2px;background:#c9c9c9;"></div>
<div class="t m" style="left:14.80px;top:297.36px;font-size:21.5px;color:#444444;">8</div>
<div class="t m" style="left:72.63px;top:297.36px;font-size:21.5px;color:#444444;">2007-12-17 00:00:00</div>
<div class="t m" style="left:338.88px;top:297.36px;font-size:21.5px;color:#444444;">FLORIDA</div>
<div class="t m" style="left:457.88px;top:297.36px;font-size:21.5px;color:#444444;">Tornado</div>
<div class="t m" style="left:698.28px;top:297.36px;font-size:21.5px;color:#444444;">15000</div>
<div class="r" style="left:0px;top:362.5px;width:802px;height:2px;background:#c9c9c9;"></div>
<div class="t m" style="left:14.80px;top:337.86px;font-size:21.5px;color:#444444;">9</div>
<div class="t m" style="left:72.63px;top:337.86px;font-size:21.5px;color:#444444;">2007-12-10 00:00:00</div>
<div class="t m" style="left:338.88px;top:337.86px;font-size:21.5px;color:#444444;">TEXAS</div>
<div class="t m" style="left:457.88px;top:337.86px;font-size:21.5px;color:#444444;">Thunderstorm Wind</div>
<div class="t m" style="left:698.28px;top:337.86px;font-size:21.5px;color:#444444;">5000</div>
<div class="r" style="left:0px;top:403.0px;width:802px;height:2px;background:#c9c9c9;"></div>
<div class="t m" style="left:14.80px;top:378.36px;font-size:21.5px;color:#444444;">10</div>
<div class="t m" style="left:72.63px;top:378.36px;font-size:21.5px;color:#444444;">2007-12-10 00:00:00</div>
<div class="t m" style="left:338.88px;top:378.36px;font-size:21.5px;color:#444444;">TEXAS</div>
<div class="t m" style="left:457.88px;top:378.36px;font-size:21.5px;color:#444444;">Tornado</div>
<div class="t m" style="left:698.28px;top:378.36px;font-size:21.5px;color:#444444;">12000</div>
<div class="r" style="left:0px;top:443.5px;width:802px;height:2px;background:#c9c9c9;"></div>
<div class="t m" style="left:14.80px;top:418.86px;font-size:21.5px;color:#444444;">11</div>
<div class="t m" style="left:72.63px;top:418.86px;font-size:21.5px;color:#444444;">2007-12-17 00:00:00</div>
<div class="t m" style="left:338.88px;top:418.86px;font-size:21.5px;color:#444444;">TEXAS</div>
<div class="t m" style="left:457.88px;top:418.86px;font-size:21.5px;color:#444444;">Hail</div>
<div class="t m" style="left:698.28px;top:418.86px;font-size:21.5px;color:#444444;">0</div>
<div class="r" style="left:0px;top:484.0px;width:802px;height:2px;background:#c9c9c9;"></div>
<div class="t m" style="left:14.80px;top:459.36px;font-size:21.5px;color:#444444;">12</div>
<div class="t m" style="left:72.63px;top:459.36px;font-size:21.5px;color:#444444;">2007-12-17 00:00:00</div>
<div class="t m" style="left:338.88px;top:459.36px;font-size:21.5px;color:#444444;">TEXAS</div>
<div class="t m" style="left:457.88px;top:459.36px;font-size:21.5px;color:#444444;">Hail</div>
<div class="t m" style="left:698.28px;top:459.36px;font-size:21.5px;color:#444444;">0</div>
<div class="r" style="left:55.75px;top:0;width:1.8px;height:465px;background:repeating-linear-gradient(to bottom,#b3b3b3 0 2px,transparent 2px 4px)"></div>
<div class="r" style="left:322.00px;top:0;width:1.8px;height:465px;background:repeating-linear-gradient(to bottom,#b3b3b3 0 2px,transparent 2px 4px)"></div>
<div class="r" style="left:441.00px;top:0;width:1.8px;height:465px;background:repeating-linear-gradient(to bottom,#b3b3b3 0 2px,transparent 2px 4px)"></div>
<div class="r" style="left:681.40px;top:0;width:1.8px;height:465px;background:repeating-linear-gradient(to bottom,#b3b3b3 0 2px,transparent 2px 4px)"></div>
<div class="r" style="left:801.00px;top:0;width:1.8px;height:465px;background:repeating-linear-gradient(to bottom,#b3b3b3 0 2px,transparent 2px 4px)"></div>
</div>
<svg class="r" style="left:869px;top:663px;" width="14" height="22" viewBox="0 0 14 22"><path d="M1 1 V17 L5 13 L8 20 L10.5 19 L7.5 12 H13z" fill="#fff" stroke="#111" stroke-width="1.1" stroke-linejoin="round"/></svg>
<svg class="r" style="left:1824.5px;top:508px;" width="13" height="11" viewBox="0 0 13 11"><path d="M0.5 5.5 H8 M5 1.5 L10 5.5 L5 9.5" fill="none" stroke="#1f64b8" stroke-width="2.6"/></svg>
<svg class="r" style="left:1828px;top:509px;" width="20" height="22" viewBox="0 0 20 22"><path d="M2 21 V9 M2 20 H17 V7 L12 1.5" fill="none" stroke="#3a3a3a" stroke-width="2"/><path d="M7 20 V9 M12 20 V6" stroke="#3a3a3a" stroke-width="2"/></svg>
<svg class="r" style="left:1824.5px;top:543.5px;" width="13" height="11" viewBox="0 0 13 11"><path d="M0.5 5.5 H8 M5 1.5 L10 5.5 L5 9.5" fill="none" stroke="#1f64b8" stroke-width="2.6"/></svg>
<div class="r" style="left:1789.7px;top:554.2px;width:23.3px;height:14.7px;background:#cacaca;"></div>
<svg class="r" style="left:1828px;top:545px;" width="22" height="22" viewBox="0 0 22 22"><path d="M3 10 V20 H7" fill="none" stroke="#3a3a3a" stroke-width="1.8"/><path d="M11 1 L16 4 L16 9 H11z" fill="#3a3a3a"/><rect x="9" y="11" width="12" height="10" fill="#3a3a3a"/><g fill="#fff"><rect x="10.5" y="13" width="2" height="2"/><rect x="14" y="13" width="2" height="2"/><rect x="17.5" y="13" width="2" height="2"/><rect x="10.5" y="17" width="2" height="2"/><rect x="14" y="17" width="2" height="2"/><rect x="17.5" y="17" width="2" height="2"/></g></svg>
<svg class="r" style="left:1824.5px;top:579px;" width="13" height="11" viewBox="0 0 13 11"><path d="M0.5 5.5 H8 M5 1.5 L10 5.5 L5 9.5" fill="none" stroke="#1f64b8" stroke-width="2.6"/></svg>
<svg class="r" style="left:1828px;top:582px;" width="22" height="20" viewBox="0 0 22 20"><path d="M15 1.5 Q18 1.5 18 4 V8 Q18 9.5 20 10 Q18 10.5 18 12 V16 Q18 18.5 15 18.5" fill="none" stroke="#3a3a3a" stroke-width="2.4"/><path d="M5 8 Q2.5 8.5 2.5 10 V15 Q2.5 18.5 5 18.5" fill="none" stroke="#3a3a3a" stroke-width="2.4"/></svg>
<svg class="r" style="left:1824.5px;top:613px;" width="13" height="11" viewBox="0 0 13 11"><path d="M0.5 5.5 H8 M5 1.5 L10 5.5 L5 9.5" fill="none" stroke="#1f64b8" stroke-width="2.6"/></svg>
<svg class="r" style="left:1826px;top:618px;" width="24" height="20" viewBox="0 0 24 20"><path d="M7 5 L2.5 10.5 L7 16 M17 1.5 L22 8.5 L17 16" fill="none" stroke="#3a3a3a" stroke-width="3"/></svg>
<svg class="r" style="left:1826px;top:650px;" width="24" height="23" viewBox="0 0 24 23"><g fill="#3a3a3a"><rect x="1.5" y="8" width="3" height="14"/><rect x="7" y="12" width="3" height="10"/><rect x="12.5" y="1" width="3" height="21"/><rect x="18" y="8" width="3" height="14"/></g></svg>
<svg class="r" style="left:1825px;top:684px;" width="25" height="23" viewBox="0 0 25 23"><rect x="1" y="0" width="23" height="5" fill="#3a3a3a"/><path d="M1 5 V8 M23.5 5 V20 H18" fill="none" stroke="#3a3a3a" stroke-width="1.8"/><path d="M2 9 V21 H13 M0 11 L2 8.5 L4 11 M11 19 L13.5 21 L11 23" fill="none" stroke="#3a3a3a" stroke-width="1.2"/><g fill="#3a3a3a"><rect x="5" y="15" width="1.5" height="4"/><rect x="8" y="13" width="1.5" height="6"/><rect x="11" y="10" width="1.5" height="9"/></g></svg>
<div class="r" style="left:63px;top:1019px;width:1807px;height:37px;background:#007acc;"></div>
<div class="r" style="left:0px;top:1056px;width:1870px;height:4px;background:#000000;"></div>
<svg class="r" style="left:88px;top:1025px;" width="25" height="25" viewBox="0 0 25 25"><circle cx="12" cy="12" r="10" fill="none" stroke="#fff" stroke-width="1.5"/><path d="M8 8 L16 16 M16 8 L8 16" stroke="#fff" stroke-width="1.5"/></svg>
<div class="t" style="left:116.21px;top:1027.87px;font-size:19.8px;color:#ffffff;">0</div>
<svg class="r" style="left:132px;top:1025px;" width="25" height="24" viewBox="0 0 25 24"><path d="M12.5 2 L23 21.5 H2z" fill="none" stroke="#fff" stroke-width="1.6" stroke-linejoin="miter"/><path d="M12.5 9 V15.5 M12.5 17 V19" stroke="#fff" stroke-width="1.8"/></svg>
<div class="t" style="left:160.21px;top:1027.87px;font-size:19.8px;color:#ffffff;">0</div>
<div class="t" style="left:661.52px;top:1027.87px;font-size:19.8px;color:#ffffff;letter-spacing:-0.050px;">Ln 4, Col 46</div>
<div class="t" style="left:794.21px;top:1027.87px;font-size:19.8px;color:#ffffff;letter-spacing:-0.466px;">Spaces: 4</div>
<div class="t" style="left:904.72px;top:1027.87px;font-size:19.8px;color:#ffffff;letter-spacing:-0.290px;">UTF-8</div>
<div class="t" style="left:985.92px;top:1027.87px;font-size:19.8px;color:#ffffff;letter-spacing:-1.092px;">LF</div>
<div class="t" style="left:1033.42px;top:1027.87px;font-size:19.8px;color:#ffffff;letter-spacing:0.922px;">Kusto</div>
<div class="t" style="left:1113.22px;top:1027.87px;font-size:19.8px;color:#ffffff;letter-spacing:-0.535px;">KUSTO</div>
<div class="t" style="left:1205.81px;top:1027.87px;font-size:19.8px;color:#ffffff;letter-spacing:0.296px;">6,004 rows</div>
<div class="t" style="left:1332.21px;top:1027.87px;font-size:19.8px;color:#ffffff;letter-spacing:0.281px;">00:00:00</div>
<div class="t" style="left:1436.81px;top:1027.87px;font-size:19.8px;color:#ffffff;letter-spacing:0.393px;">help.kusto.windows.net : Samples</div>
<svg class="r" style="left:1773px;top:1025px;" width="27" height="25" viewBox="0 0 27 25"><circle cx="9" cy="10" r="4.5" fill="none" stroke="#fff" stroke-width="1.5"/><path d="M2 23 Q3 15.5 9 15.5 Q15 15.5 16 23" fill="none" stroke="#fff" stroke-width="1.5"/><path d="M11 2 H25 V12 H19 L16 15 V12" fill="none" stroke="#fff" stroke-width="1.5"/></svg>
<svg class="r" style="left:1826px;top:1024px;" width="22" height="26" viewBox="0 0 22 26"><path d="M4 18 V11 Q4 4 11 4 Q18 4 18 11 V18 L20 20.5 H2z" fill="none" stroke="#fff" stroke-width="1.6" stroke-linejoin="round"/><path d="M8 22.5 Q11 25.5 14 22.5" fill="none" stroke="#fff" stroke-width="1.6"/><path d="M11 1.5 V4" stroke="#fff" stroke-width="1.6"/></svg>
</body></html>
